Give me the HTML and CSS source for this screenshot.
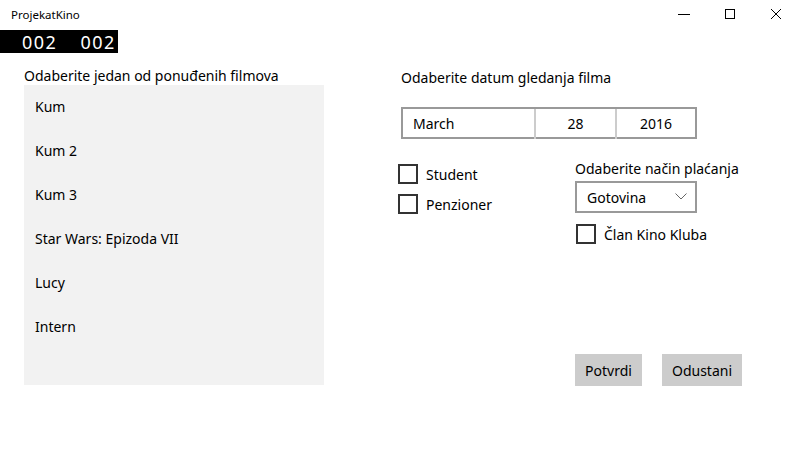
FILE: index.html
```html
<!DOCTYPE html>
<html lang="sr">
<head>
<meta charset="utf-8">
<title>ProjekatKino</title>
<link rel="stylesheet" href="styles.css">
</head>
<body>
<div class="titlebar">
  <span class="app-title">ProjekatKino</span>
  <div class="win-controls">
    <span class="wc"><svg width="12" height="12" viewBox="0 0 12 12"><line x1="0" y1="6.5" x2="12" y2="6.5" stroke="#000" stroke-width="1"/></svg></span>
    <span class="wc"><svg width="12" height="12" viewBox="0 0 12 12"><rect x="1.5" y="1.5" width="9" height="9" fill="none" stroke="#000" stroke-width="1"/></svg></span>
    <span class="wc"><svg width="12" height="12" viewBox="0 0 12 12"><path d="M1 1 L11 11 M11 1 L1 11" stroke="#000" stroke-width="1"/></svg></span>
  </div>
</div>
<div class="counter"><span>002</span><span>002</span></div>
<div class="main">
  <div class="left">
    <div class="label">Odaberite jedan od ponuđenih filmova</div>
    <div class="list">
      <div class="item">Kum</div>
      <div class="item">Kum 2</div>
      <div class="item">Kum 3</div>
      <div class="item">Star Wars: Epizoda VII</div>
      <div class="item">Lucy</div>
      <div class="item">Intern</div>
    </div>
  </div>
  <div class="right">
    <div class="label date-label">Odaberite datum gledanja filma</div>
    <div class="datepicker">
      <div class="dp-month">March</div>
      <div class="dp-day">28</div>
      <div class="dp-year">2016</div>
    </div>
    <div class="options">
      <div class="checks">
        <label class="check"><span class="box"></span>Student</label>
        <label class="check"><span class="box"></span>Penzioner</label>
      </div>
      <div class="payment">
        <div class="label">Odaberite način plaćanja</div>
        <div class="combo"><span>Gotovina</span><svg width="12" height="7" viewBox="0 0 12 7"><path d="M0.5 0.5 L6 6 L11.5 0.5" fill="none" stroke="#666" stroke-width="1"/></svg></div>
        <label class="check"><span class="box"></span>Član Kino Kluba</label>
      </div>
    </div>
    <div class="buttons">
      <button class="btn btn-ok">Potvrdi</button>
      <button class="btn btn-cancel">Odustani</button>
    </div>
  </div>
</div>
</body>
</html>
```
FILE: styles.css
```css
* { box-sizing: border-box; }
html, body { margin: 0; padding: 0; background: #fff; }
body {
  width: 796px;
  height: 469px;
  overflow: hidden;
  font-family: "Noto Sans", "Open Sans", sans-serif;
  font-size: 14px;
  color: #000;
}
.titlebar {
  height: 30px;
  display: flex;
  align-items: center;
  justify-content: space-between;
}
.app-title {
  font-size: 11.5px;
  padding-left: 11px;
  margin-top: -2px;
}
.win-controls {
  display: flex;
  margin-right: -3px;
  align-self: stretch;
}
.wc {
  width: 46px;
  display: flex;
  align-items: center;
  justify-content: center;
  margin-top: -2px;
}
.counter {
  width: 118px;
  height: 23px;
  background: #000;
  color: #fff;
  font-size: 18px;
  letter-spacing: 1.5px;
  display: flex;
  align-items: center;
  gap: 23px;
  padding-left: 22px;
}
.main {
  display: grid;
  grid-template-columns: 300px 1fr;
  column-gap: 77px;
  padding-left: 24px;
  margin-top: 14px;
}
.label {
  line-height: 18px;
  height: 18px;
}
.list {
  background: #f2f2f2;
  height: 300px;
}
.item {
  height: 44px;
  line-height: 44px;
  padding-left: 11px;
}
.date-label { margin-top: 2px; }
.datepicker {
  margin-top: 20px;
  width: 296px;
  height: 32px;
  border: 2px solid #999;
  display: grid;
  grid-template-columns: 133px 81px 1fr;
  line-height: 30px;
}
.dp-month { padding-left: 10px; border-right: 2px solid #ccc; }
.dp-day { text-align: center; border-right: 2px solid #ccc; }
.dp-year { text-align: center; }
.options {
  display: flex;
  margin-top: 25px;
  margin-left: -3px;
  height: 190px;
}
.checks {
  width: 177px;
  display: flex;
  flex-direction: column;
  gap: 10px;
}
.check {
  display: flex;
  align-items: center;
  gap: 8px;
  height: 20px;
}
.box {
  width: 20px;
  height: 20px;
  border: 2px solid #333;
  display: inline-block;
}
.payment {
  display: flex;
  flex-direction: column;
  margin-top: -4px;
}
.combo {
  margin-top: 3px;
  width: 122px;
  height: 32px;
  border: 2px solid #999;
  display: flex;
  align-items: center;
  justify-content: space-between;
  padding: 0 8px 0 10px;
}
.combo svg { margin-top: -1px; }
.payment .check { margin-top: 11px; margin-left: 1px; }
.buttons {
  display: flex;
  gap: 20px;
  margin-left: 174px;
  margin-top: 0;
}
.btn {
  font-family: inherit;
  font-size: 14px;
  background: #ccc;
  border: none;
  height: 32px;
  padding: 0;
  color: #000;
}
.btn-ok { width: 67px; }
.btn-cancel { width: 80px; }
```
